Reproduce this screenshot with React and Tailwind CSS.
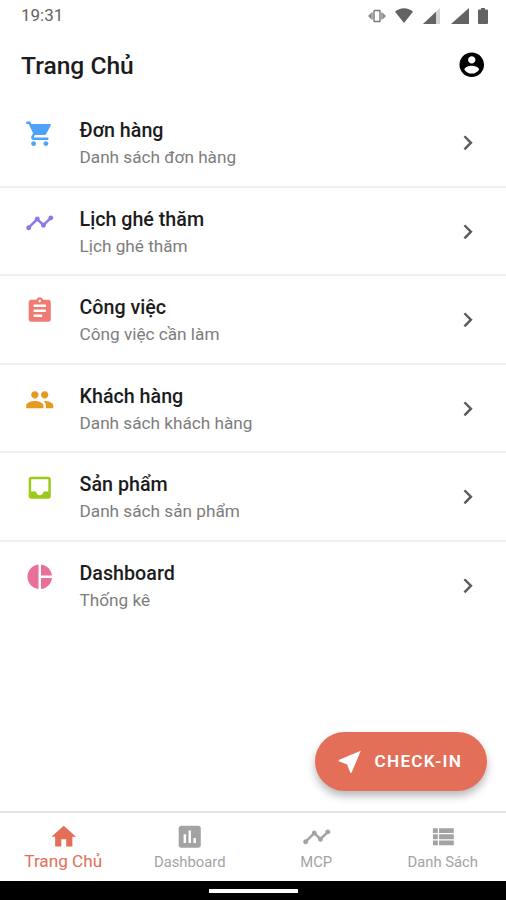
import React from 'react';
import clsx from 'clsx';

const paths = {
    account: 'M12 2C6.48 2 2 6.48 2 12s4.48 10 10 10 10-4.48 10-10S17.52 2 12 2zm0 3c1.66 0 3 1.34 3 3s-1.34 3-3 3-3-1.34-3-3 1.34-3 3-3zm0 14.2c-2.5 0-4.71-1.28-6-3.22.03-1.99 4-3.08 6-3.08 1.99 0 5.97 1.09 6 3.08-1.29 1.94-3.5 3.22-6 3.22z',
    cart: 'M7 18c-1.1 0-1.99.9-1.99 2S5.9 22 7 22s2-.9 2-2-.9-2-2-2zM1 2v2h2l3.6 7.59-1.35 2.45c-.16.28-.25.61-.25.96 0 1.1.9 2 2 2h12v-2H7.42c-.14 0-.25-.11-.25-.25l.03-.12.9-1.63h7.45c.75 0 1.41-.41 1.75-1.03l3.58-6.49c.08-.14.12-.31.12-.48 0-.55-.45-1-1-1H5.21l-.94-2H1zm16 16c-1.1 0-1.99.9-1.99 2s.89 2 1.99 2 2-.9 2-2-.9-2-2-2z',
    timeline: 'M23 8c0 1.1-.9 2-2 2-.18 0-.35-.02-.51-.07l-3.56 3.55c.05.16.07.34.07.52 0 1.1-.9 2-2 2s-2-.9-2-2c0-.18.02-.36.07-.52l-2.55-2.55c-.16.05-.34.07-.52.07s-.36-.02-.52-.07l-4.55 4.56c.05.16.07.33.07.51 0 1.1-.9 2-2 2s-2-.9-2-2 .9-2 2-2c.18 0 .35.02.51.07l4.56-4.55C8.02 9.36 8 9.18 8 9c0-1.1.9-2 2-2s2 .9 2 2c0 .18-.02.36-.07.52l2.55 2.55c.16-.05.34-.07.52-.07s.36.02.52.07l3.55-3.56C19.02 8.35 19 8.18 19 8c0-1.1.9-2 2-2s2 .9 2 2z',
    assignment: 'M19 3h-4.18C14.4 1.84 13.3 1 12 1c-1.3 0-2.4.84-2.82 2H5c-1.1 0-2 .9-2 2v14c0 1.1.9 2 2 2h14c1.1 0 2-.9 2-2V5c0-1.1-.9-2-2-2zm-7 0c.55 0 1 .45 1 1s-.45 1-1 1-1-.45-1-1 .45-1 1-1zm2 14H7v-2h7v2zm3-4H7v-2h10v2zm0-4H7V7h10v2z',
    people: 'M16 11c1.66 0 2.99-1.34 2.99-3S17.66 5 16 5c-1.66 0-3 1.34-3 3s1.34 3 3 3zm-8 0c1.66 0 2.99-1.34 2.99-3S9.66 5 8 5C6.34 5 5 6.34 5 8s1.34 3 3 3zm0 2c-2.33 0-7 1.17-7 3.5V19h14v-2.5c0-2.33-4.67-3.5-7-3.5zm8 0c-.29 0-.62.02-.97.05 1.16.84 1.97 1.97 1.97 3.45V19h6v-2.5c0-2.33-4.67-3.5-7-3.5z',
    inbox: 'M19 3H4.99c-1.11 0-1.98.89-1.98 2L3 19c0 1.1.88 2 1.99 2H19c1.1 0 2-.9 2-2V5c0-1.11-.9-2-2-2zm0 12h-4c0 1.66-1.35 3-3 3s-3-1.34-3-3H4.99V5H19v10z',
    pie: 'M11 2v20c-5.07-.5-9-4.79-9-10s3.93-9.5 9-10zm2.03 0v8.99H22c-.47-4.74-4.24-8.52-8.97-8.99zm0 11.01V22c4.74-.47 8.5-4.25 8.97-8.99h-8.97z',
    chevron: 'M10 6L8.59 7.41 13.17 12l-4.58 4.59L10 18l6-6z',
    nearMe: 'M21 3L3 10.53v.98l6.84 2.65L12.48 21h.98L21 3z',
    home: 'M10 20v-6h4v6h5v-8h3L12 3 2 12h3v8z',
    assessment: 'M19 3H5c-1.1 0-2 .9-2 2v14c0 1.1.9 2 2 2h14c1.1 0 2-.9 2-2V5c0-1.1-.9-2-2-2zM9 17H7v-7h2v7zm4 0h-2V7h2v10zm4 0h-2v-4h2v4z',
    viewList: 'M4 14h4v-4H4v4zm0 5h4v-4H4v4zM4 9h4V5H4v4zm5 5h12v-4H9v4zm0 5h12v-4H9v4zM9 5v4h12V5H9z',
};

const Icon = ({ name, className }) => (
    <svg viewBox="0 0 24 24" fill="currentColor" className={clsx('shrink-0', className)}>
        <path d={paths[name]} />
    </svg>
);

const menu = [
    { icon: 'cart', color: 'text-[#4da3fa]', title: 'Đơn hàng', subtitle: 'Danh sách đơn hàng' },
    { icon: 'timeline', color: 'text-[#8c78ea]', title: 'Lịch ghé thăm', subtitle: 'Lịch ghé thăm' },
    { icon: 'assignment', color: 'text-[#f07b72]', title: 'Công việc', subtitle: 'Công việc cần làm' },
    { icon: 'people', color: 'text-[#e59b22]', title: 'Khách hàng', subtitle: 'Danh sách khách hàng' },
    { icon: 'inbox', color: 'text-[#9acb1c]', title: 'Sản phẩm', subtitle: 'Danh sách sản phẩm' },
    { icon: 'pie', color: 'text-[#e8709a]', title: 'Dashboard', subtitle: 'Thống kê' },
];

const tabs = [
    { icon: 'home', label: 'Trang Chủ', active: true },
    { icon: 'assessment', label: 'Dashboard' },
    { icon: 'timeline', label: 'MCP' },
    { icon: 'viewList', label: 'Danh Sách' },
];

const StatusBar = () => (
    <div className="flex h-[31px] items-center justify-between pl-[21px] pr-[18px] text-[#636363]">
        <span className="text-[17px] leading-[31px]">19:31</span>
        <div className="flex items-center">
            <svg viewBox="0 0 18 14" className="h-3.5 w-[18px]">
                <path d="M0 7l3-3v6zM18 7l-3-3v6z" fill="#8a8a8a" />
                <path d="M3 3.5h2v7H3zM13 3.5h2v7h-2z" fill="#a5a5a5" />
                <rect x="6" y="1.5" width="6" height="11" rx="0.5" fill="none" stroke="#777" strokeWidth="1.4" />
            </svg>
            <svg viewBox="0 0 18 15" fill="currentColor" className="ml-[9px] h-[15px] w-[18px]">
                <path d="M9 15L0 3.8C2.500 1.500 5.500 0.300 9 0.300s6.500 1.200 9 3.500z" />
            </svg>
            <svg viewBox="0 0 17 16" fill="currentColor" className="ml-[10px] h-4 w-[17px]">
                <path d="M17 0v16H0z" fill="#d4d4d4" />
                <path d="M13 3.800V16H0z" />
            </svg>
            <svg viewBox="0 0 18 16" fill="currentColor" className="ml-[11px] h-4 w-[18px]">
                <path d="M18 0v16H0z" />
            </svg>
            <svg viewBox="0 0 10 16" fill="currentColor" className="ml-[9px] h-4 w-2.5">
                <path d="M3 0h4v1.500h2q1 0 1 1V15q0 1-1 1H1q-1 0-1-1V2.500q0-1 1-1h2z" />
            </svg>
        </div>
    </div>
);

const MenuRow = ({ icon, color, title, subtitle }) => (
    <li className="flex h-[88.6px] border-b-2 border-[#efefef] pl-[25px] pr-6 last:border-transparent">
        <Icon name={icon} className={clsx('mt-5 size-[29.5px]', color)} />
        <div className="ml-[25px] flex-1 pt-[18px]">
            <div className="text-[19.7px] leading-[27px] font-medium text-[#1c1c1c]">{title}</div>
            <div className="text-[17.2px] leading-[27px] text-[#7d7d7d]">{subtitle}</div>
        </div>
        <Icon name="chevron" className="mt-[29px] size-[29.5px] text-[#5c5c5c]" />
    </li>
);

const BottomNav = () => (
    <nav className="grid h-[70px] grid-cols-4 border-t-2 border-[#e4e4e4] bg-white">
        {tabs.map(({ icon, label, active }) => (
            <div
                key={label}
                className={clsx('flex flex-col items-center pt-[9px]', active ? 'text-[#e36f58]' : 'text-[#a3a3a3]')}
            >
                <Icon name={icon} className="size-[29.5px]" />
                <span
                    className={clsx(
                        'whitespace-nowrap leading-[18px]',
                        active ? 'text-[17.2px]' : 'mt-px text-[14.8px]'
                    )}
                >
                    {label}
                </span>
            </div>
        ))}
    </nav>
);

const App = () => {
    return (
        <div className="relative flex h-[900px] w-[506px] flex-col overflow-hidden bg-white font-['Roboto',sans-serif]">
            <StatusBar />

            <header className="flex h-[68px] items-center justify-between pl-[21px] pr-[19.5px]">
                <h1 className="pt-px text-[24.6px] leading-[30px] font-medium text-[#1c1c1c]">Trang Chủ</h1>
                <Icon name="account" className="-mt-px size-[29.5px] text-black" />
            </header>

            <ul className="flex-1">
                {menu.map((item) => (
                    <MenuRow key={item.title} {...item} />
                ))}
            </ul>

            <button className="absolute right-[19px] bottom-[109px] flex h-[59px] w-[172px] items-center rounded-full bg-[#e36f58] pl-5 text-white shadow-[0_5px_8px_rgba(0,0,0,0.28)]">
                <Icon name="nearMe" className="size-[29.5px]" />
                <span className="ml-[10px] whitespace-nowrap pt-px text-[17.2px] font-semibold tracking-[1.25px]">CHECK-IN</span>
            </button>

            <BottomNav />

            <div className="flex h-[19px] justify-center bg-black pt-2">
                <div className="h-1 w-[89px] bg-white" />
            </div>
        </div>
    );
};

export default App;
